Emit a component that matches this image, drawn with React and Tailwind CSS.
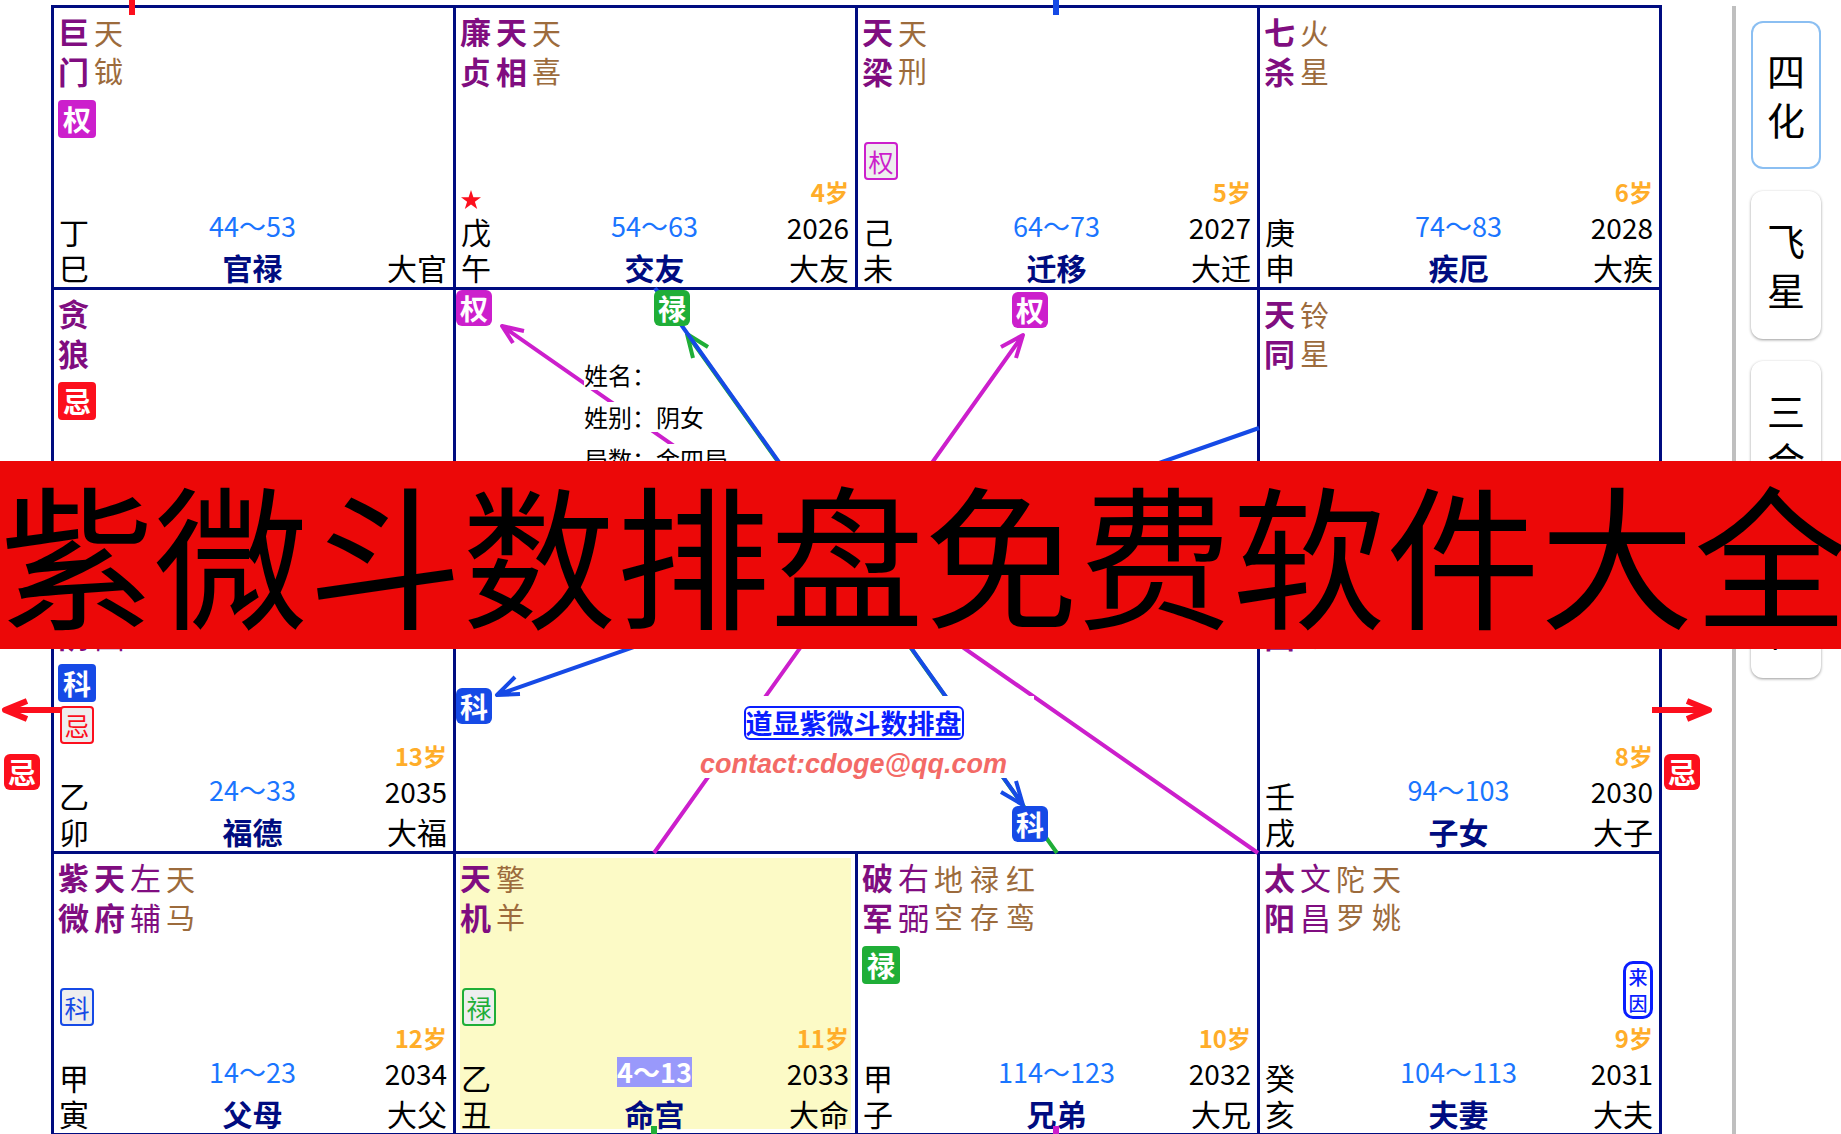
import React, { useState } from 'react';
import clsx from 'clsx';

const palaces = [
  {
    stem: '丁', branch: '巳', name: '官禄', range: '44～53', big: '大官',
    major: ['巨门'], evil: ['天钺'], natal: '权',
  },
  {
    stem: '戊', branch: '午', name: '交友', range: '54～63', big: '大友', year: 2026, age: '4岁',
    major: ['廉贞', '天相'], evil: ['天喜'], marked: true,
  },
  {
    stem: '己', branch: '未', name: '迁移', range: '64～73', big: '大迁', year: 2027, age: '5岁',
    major: ['天梁'], evil: ['天刑'], decade: '权',
  },
  {
    stem: '庚', branch: '申', name: '疾厄', range: '74～83', big: '大疾', year: 2028, age: '6岁',
    major: ['七杀'], evil: ['火星'],
  },
  {
    stem: '丙', branch: '辰', name: '田宅', range: '34～43', big: '大田', year: 2036, age: '14岁',
    major: ['贪狼'], natal: '忌',
  },
  {
    stem: '辛', branch: '酉', name: '财帛', range: '84～93', big: '大财', year: 2029, age: '7岁',
    major: ['天同'], evil: ['铃星'],
  },
  {
    stem: '乙', branch: '卯', name: '福德', range: '24～33', big: '大福', year: 2035, age: '13岁',
    major: ['太阴'], minor: ['文曲'], evil: ['天魁'], natal: '科', decade: '忌',
  },
  {
    stem: '壬', branch: '戌', name: '子女', range: '94～103', big: '大子', year: 2030, age: '8岁',
    major: ['武曲'], evil: ['地劫'],
  },
  {
    stem: '甲', branch: '寅', name: '父母', range: '14～23', big: '大父', year: 2034, age: '12岁',
    major: ['紫微', '天府'], minor: ['左辅'], evil: ['天马'], decade: '科',
  },
  {
    stem: '乙', branch: '丑', name: '命宫', range: '4～13', big: '大命', year: 2033, age: '11岁',
    major: ['天机'], evil: ['擎羊'], decade: '禄', active: true,
  },
  {
    stem: '甲', branch: '子', name: '兄弟', range: '114～123', big: '大兄', year: 2032, age: '10岁',
    major: ['破军'], minor: ['右弼'], evil: ['地空', '禄存', '红鸾'], natal: '禄',
  },
  {
    stem: '癸', branch: '亥', name: '夫妻', range: '104～113', big: '大夫', year: 2031, age: '9岁',
    major: ['太阳'], minor: ['文昌'], evil: ['陀罗', '天姚'], origin: true,
  },
];

const solid = {
  权: 'bg-[#cc1fcc]',
  禄: 'bg-[#1fae37]',
  科: 'bg-[#164ae6]',
  忌: 'bg-[#fc0f1d]',
};

const outlined = {
  权: 'border-[#cc1fcc] text-[#cc1fcc]',
  禄: 'border-[#1fae37] text-[#1fae37]',
  科: 'border-[#164ae6] text-[#164ae6]',
  忌: 'border-[#fc0f1d] text-[#fc0f1d]',
};

const Star = ({ name, className }) => (
  <span className={clsx('flex w-9 flex-col', className)}>
    {[...name].map((c, i) => <span key={i}>{c}</span>)}
  </span>
);

// Badge at the end of a flying line
const Fly = ({ type, className }) => (
  <span
    className={clsx(
      'absolute z-10 flex size-9 items-center justify-center rounded-md text-[28px] leading-[34px] font-bold text-white',
      solid[type],
      className
    )}
  >
    {type}
  </span>
);

const Palace = ({ data }) => (
  <div className="bg-white p-1">
    <div className={clsx('flex h-full min-h-[271px] flex-col', data.active && 'bg-[#fcfac6]')}>
      <div className="-mt-px mb-px flex min-h-20">
        {data.major.map((s) => (
          <Star key={s} name={s} className="text-[31px] leading-10 font-bold text-[#800d80]" />
        ))}
        {data.minor?.map((s) => (
          <Star key={s} name={s} className="text-[31px] leading-10 text-[#800d80]" />
        ))}
        {data.evil?.map((s) => (
          <Star key={s} name={s} className="pt-0.5 text-[29px] leading-[38px] text-[#9c6b3c]" />
        ))}
      </div>

      <div className="grid flex-1 grid-cols-3 pr-0.5 pb-0.5">
        <div className="flex flex-col pt-2 text-[30px] leading-7">
          <div className="mb-1 h-[38px]">
            {data.natal && (
              <span
                className={clsx(
                  'relative z-10 flex size-[38px] items-center justify-center rounded-sm text-[28px] font-bold text-white',
                  solid[data.natal]
                )}
              >
                {data.natal}
              </span>
            )}
          </div>
          <div className="h-[38px] pl-0.5">
            {data.decade && (
              <span
                className={clsx(
                  'relative z-10 flex h-[38px] w-[34px] items-center justify-center rounded-sm border-2 bg-[#eeeeee] text-[25px]',
                  outlined[data.decade]
                )}
              >
                {data.decade}
              </span>
            )}
          </div>
          <div className="mt-auto pl-px">
            {data.marked && (
              <svg viewBox="0 0 20 19" className="mb-2 h-[19px] w-5 fill-[#fc0f1d]" aria-hidden="true">
                <path d="M10 0l2.4 7.2H20l-6.1 4.5 2.3 7.3L10 14.6 3.8 19l2.3-7.3L0 7.2h7.6z" />
              </svg>
            )}
            <div className="mb-2">{data.stem}</div>
            <div>{data.branch}</div>
          </div>
        </div>

        <div className="flex flex-col items-center justify-end">
          <span
            className={clsx(
              'mb-3 text-[27px] leading-[30px]',
              data.active ? 'bg-[#9999fb] font-bold text-white' : 'text-[#1a75ff]'
            )}
          >
            {data.range}
          </span>
          <span className="text-[30px] leading-7 font-bold text-[#000c80]">{data.name}</span>
        </div>

        <div className="flex flex-col items-end justify-end">
          {data.origin && (
            <span className="mb-1 flex h-[58px] w-[30px] flex-col items-center rounded-[10px] border-3 border-[#0a1eff] text-[19px] leading-[26px] font-medium text-[#0a1eff]">
              <span>来</span>
              <span>因</span>
            </span>
          )}
          {data.age && <span className="mb-1.5 text-2xl leading-[30px] font-bold text-[#ffad29]">{data.age}</span>}
          {data.year && <span className="mb-3 text-[28px] leading-7">{data.year}</span>}
          <span className="text-[30px] leading-7">{data.big}</span>
        </div>
      </div>
    </div>
  </div>
);

const Center = () => (
  <div className="col-span-2 row-span-2 flex flex-col items-center justify-between bg-white">
    <dl className="relative z-10 flex flex-col gap-3 self-start pt-[70px] pl-32 text-2xl leading-[30px]">
      <div className="flex w-fit bg-white"><dt>姓名：</dt><dd></dd></div>
      <div className="flex w-fit bg-white"><dt>姓别：</dt><dd>阴女</dd></div>
      <div className="flex w-fit bg-white"><dt>局数：</dt><dd>金四局</dd></div>
    </dl>
    <div className="relative z-10 mb-[73px] flex w-[354px] flex-col items-center bg-white pt-2.5 pr-1.5">
      <span className="rounded-md border-2 border-[#0a1eff] text-[27px] leading-[30px] font-bold whitespace-nowrap text-[#0a1eff]">
        道显紫微斗数排盘
      </span>
      <span className="mt-2.5 font-['Liberation_Sans',Arial,sans-serif] text-[27px] leading-7 font-bold text-[#f36a66] italic">
        contact:cdoge@qq.com
      </span>
    </div>
  </div>
);

const Lines = () => (
  <svg
    viewBox="0 0 1732 1136"
    preserveAspectRatio="none"
    className="pointer-events-none absolute inset-0 h-full w-full"
    fill="none"
    strokeWidth="4"
    strokeLinejoin="round"
    aria-hidden="true"
  >
    <g stroke="#cc1fcc">
      <path d="M1258 853L502 326M524 331L502 326L513 343" />
      <path d="M654 853L1023 335M1001 347L1023 335L1016 358" />
    </g>
    <path stroke="#1fae37" d="M1057 853L687 334M708 347L687 334L693 358" />
    <g stroke="#164ae6">
      <path d="M655 288L1023 805M1001 792L1023 805L1016 781" />
      <path d="M1259 428L497 695M515 677L497 695L520 694" />
    </g>
    <g stroke="#fc0f1d" strokeWidth="6">
      <path d="M61 710H5M27 701L5 710L27 719" />
      <path d="M1652 710H1709M1687 701L1709 710L1687 719" />
      <path d="M132 0V15" />
    </g>
    <path stroke="#164ae6" strokeWidth="6" d="M1056 0V15" />
    <path stroke="#1fae37" strokeWidth="6" d="M654 1126V1136" />
    <path stroke="#cc1fcc" strokeWidth="6" d="M1056 1126V1136" />
  </svg>
);

const modes = [
  { id: 'sihua', groups: ['四化'] },
  { id: 'feixing', groups: ['飞星'] },
  { id: 'sanhe', groups: ['三合', '定位'] },
];

const App = () => {
  const [mode, setMode] = useState('sihua');

  return (
    <div className="relative flex h-screen overflow-hidden bg-white font-['Noto_Sans_CJK_SC',sans-serif] text-black">
      <main className="relative flex-1 self-start pt-[5px] pr-[70px] pl-[51px]">
        <div className="grid grid-cols-4 gap-[3px] bg-[#000c80] p-[3px]">
          {palaces.slice(0, 5).map((p) => <Palace key={p.branch} data={p} />)}
          <Center />
          {palaces.slice(5).map((p) => <Palace key={p.branch} data={p} />)}
        </div>
        <Lines />
        <Fly type="权" className="top-[290px] left-[456px]" />
        <Fly type="禄" className="top-[290px] left-[654px]" />
        <Fly type="权" className="top-[292px] left-[1012px]" />
        <Fly type="科" className="top-[688px] left-[456px]" />
        <Fly type="科" className="top-[806px] left-[1012px]" />
        <Fly type="忌" className="top-[754px] left-1" />
        <Fly type="忌" className="top-[754px] left-[1664px]" />
      </main>

      <aside className="mt-1.5 flex flex-col gap-[22px] border-l-4 border-[#bfbfbf] pt-[15px] pr-5 pl-[15px]">
        {modes.map((m) => (
          <button
            key={m.id}
            type="button"
            onClick={() => setMode(m.id)}
            className={clsx(
              'flex w-[70px] flex-col items-center justify-between rounded-xl bg-white pt-6 text-[38px] leading-[49px]',
              m.groups.length > 1 ? 'min-h-[317px] pb-6' : 'pb-[26px]',
              mode === m.id ? 'ring-2 ring-[#8bbff2] ring-inset' : 'shadow-[0_1px_3px_rgba(0,0,0,0.4)]'
            )}
          >
            {m.groups.map((g) => (
              <span key={g} className="flex flex-col">
                {[...g].map((c) => <span key={c}>{c}</span>)}
              </span>
            ))}
          </button>
        ))}
      </aside>

      <h1 className="absolute inset-x-0 top-[461px] z-20 h-[188px] overflow-hidden bg-[#ec0808] text-[154px] leading-[180px] whitespace-nowrap">
        紫微斗数排盘免费软件大全
      </h1>
    </div>
  );
};

export default App;
